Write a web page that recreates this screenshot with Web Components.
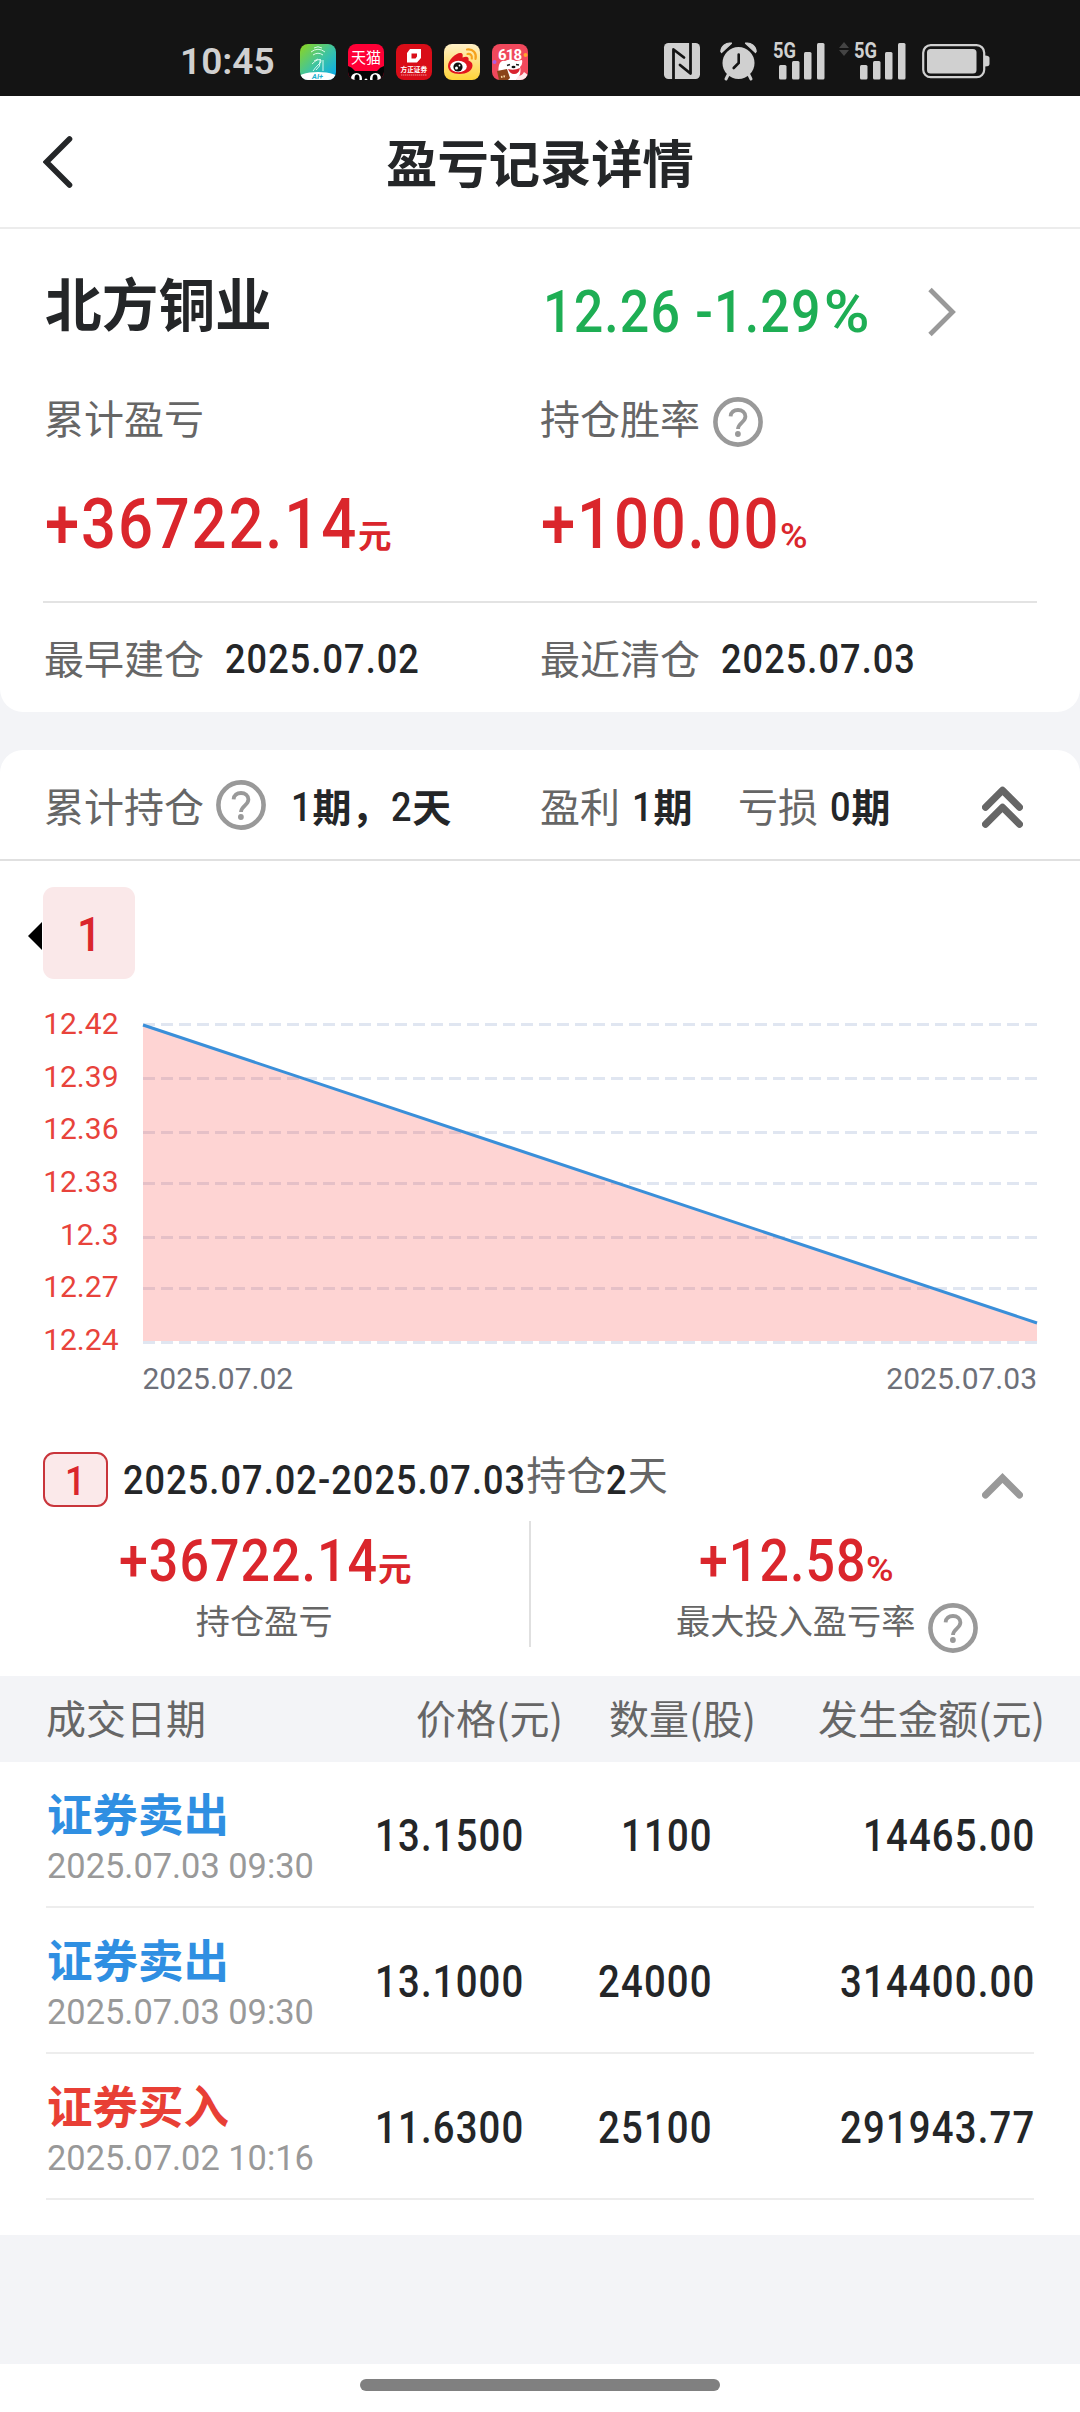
<!DOCTYPE html>
<html lang="zh-CN">
<head>
<meta charset="utf-8">
<title>盈亏记录详情</title>
<style>
    html, body {
        margin: 0;
        padding: 0;
    }
    body {
        width: 1080px;
        height: 2412px;
        overflow: hidden;
        background: #fff;
        color: #242628;
        font-family: "Noto Sans CJK SC", sans-serif;
        --gray: #666;
        --red: #da262c;
        --panel: #f3f4f7;
        --line: #e3e3e3;
    }
</style>
</head>
<body>
<pl-page></pl-page>

<script>
class BaseElement extends HTMLElement {
    constructor() {
        super();
        this.attachShadow({mode:'open'});
    }

    connectedCallback() {
        this.shadowRoot.innerHTML = this.render();
    }
}

/* narrow digits, used for all amounts and dates */
class DinText extends BaseElement {
    connectedCallback() {
        super.connectedCallback();
        const span = this.shadowRoot.querySelector('span');
        this.style.width = span.getBoundingClientRect().width + 'px';
    }

    render() {
        return `
            <style>
                :host {
                    display:inline-block;
                    flex:none;
                    font-family:Roboto, "Liberation Sans", sans-serif;
                    font-weight:500;
                    line-height:1;
                    text-align:left;
                    white-space:nowrap;
                }
                span {
                    display:inline-block;
                    letter-spacing:var(--spacing, .03em);
                    transform:scaleX(var(--stretch, .88));
                    transform-origin:0 50%;
                }
            </style>
            <span><slot></slot></span>
        `;
    }
}

class HelpIcon extends BaseElement {
    render() {
        return `
            <style>
                :host { display:block; flex:none; width:50px; height:50px; }
                svg { display:block; }
            </style>
            <svg width="50" height="50" viewBox="0 0 50 50" fill="none" stroke="#999">
                <circle cx="25" cy="25" r="22.6" stroke-width="4.6"/>
                <path d="M17.6 19.4C17.8 15 21 13 25 13s7.4 2.6 7.4 6.600c0 5.600-7.400 6.400-7.400 12.400" stroke-width="3.800"/>
                <circle cx="24.900" cy="37" r="2.900" fill="#999" stroke="none"/>
            </svg>
        `;
    }
}

class ChevronIcon extends BaseElement {
    get type(){
        return this.getAttribute("type");
    }

    get shape(){
        const shapes = {
            back: '<svg width="30" height="54" viewBox="0 0 30 54"><path d="M26.500 4L3.500 27l23 23" stroke="#242628" stroke-width="5.600" stroke-linecap="round"/></svg>',
            next: '<svg width="30" height="52" viewBox="0 0 30 52"><path d="M3 3.500L25.500 26 3 48.500" stroke="#999" stroke-width="4.800"/></svg>',
            up: '<svg width="41" height="26" viewBox="0 0 41 26"><path d="M3.500 22l17-17 17 17" stroke="#999" stroke-width="7" stroke-linecap="round"/></svg>',
            double: '<svg width="41" height="42" viewBox="0 0 41 42"><path d="M3.500 21.200l17-17 17 17M3.500 38.200l17-17 17 17" stroke="#666" stroke-width="7" stroke-linecap="round" stroke-linejoin="round"/></svg>'
        };
        return shapes[this.type];
    }

    render() {
        return `
            <style>
                :host { display:block; flex:none; }
                svg { display:block; fill:none; }
            </style>
            ${this.shape}
        `;
    }
}

class StatusBar extends BaseElement {
    signal() {
        return `
            <svg width="52" height="38" viewBox="0 0 52 38" fill="#d0d0d0">
                <text x="0" y="16" font-size="22.500" font-weight="700" textLength="23" lengthAdjust="spacingAndGlyphs">5G</text>
                <rect x="6" y="23" width="7.500" height="14.500" rx="1.500"/>
                <rect x="19" y="19" width="7.500" height="18.500" rx="1.500"/>
                <rect x="31" y="10" width="7.500" height="27.500" rx="1.500"/>
                <rect x="44" y="1" width="7.500" height="36.500" rx="1.500"/>
            </svg>
        `;
    }

    render() {
        return `
            <style>
                :host {
                    display:flex;
                    align-items:center;
                    box-sizing:border-box;
                    height:96px;
                    padding:28px 0 0 180px;
                    background:#141414;
                    color:#d0d0d0;
                    font-family:Roboto, "Noto Sans CJK SC", sans-serif;
                }
                svg { display:block; flex:none; overflow:visible; }
                .time {
                    width:120px;
                    font-size:37px;
                    font-weight:600;
                    line-height:1;
                    padding-bottom:2px;
                }
                .apps { display:flex; gap:12px; width:364px; }
                .system { display:flex; align-items:center; padding-bottom:2px; }
                .alarm { margin-left:20px; }
                .sim1 { margin-left:16px; }
                .arrows { margin:-24px 5px 0 14px; }
                .battery { margin-left:16px; }
            </style>
            <div class="time">10:45</div>
            <div class="apps">
                <svg width="36" height="36" viewBox="0 0 36 36">
                    <defs>
                        <linearGradient id="g1" x1="0" y1="0" x2="1" y2="1"><stop offset="0" stop-color="#8fd51c"/><stop offset=".5" stop-color="#3fc4a0"/><stop offset="1" stop-color="#00a8f5"/></linearGradient>
                        <clipPath id="c1"><rect width="36" height="36" rx="8"/></clipPath>
                    </defs>
                    <g clip-path="url(#c1)">
                        <rect width="36" height="36" fill="url(#g1)"/>
                        <path d="M14 4q4-2.500 8 0M11 8q7-5.500 14 0M13 11q5-3.500 10 0M12 20q6-6 9-4 1 2-3 5-3 3-5 6M16 26q5-4 4-8M23 16v11M20 15v4M14 17l4-2" fill="none" stroke="#e8fff6" stroke-width=".9"/>
                        <ellipse cx="18" cy="36" rx="22" ry="8" fill="#fff"/>
                        <text x="12" y="35" font-size="7.500" font-weight="700" font-style="italic" fill="#22b0d0">AI+</text>
                    </g>
                </svg>
                <svg width="36" height="36" viewBox="0 0 36 36">
                    <defs><clipPath id="c2"><rect width="36" height="36" rx="8"/></clipPath></defs>
                    <g clip-path="url(#c2)">
                        <rect width="36" height="36" fill="#ff0036"/>
                        <path d="M0 22q4 1 7 5h22q3-4 7-5v14H0z" fill="#050505"/>
                        <g fill="#fff"><circle cx="8.500" cy="34.500" r="5.500"/><circle cx="27.500" cy="34.500" r="5.500"/><circle cx="18" cy="36" r="1.500"/></g>
                        <ellipse cx="9" cy="34.500" rx="2.500" ry="4"/><ellipse cx="27" cy="34.500" rx="2.500" ry="4"/>
                        <text x="3" y="19" font-size="15" fill="#fff" font-weight="400">天猫</text>
                    </g>
                </svg>
                <svg width="36" height="36" viewBox="0 0 36 36">
                    <rect width="36" height="36" rx="8" fill="#d90d18"/>
                    <path fill-rule="evenodd" d="M14 5h11v9l-4 4.500H11V9zM15.500 9.500v5h4l1.500-2v-3z" fill="#fff"/>
                    <text x="4.500" y="28" font-size="6.700" fill="#fff" font-weight="700">方正证券</text>
                    <path d="M5 31h26" stroke="#f08a8a" stroke-width="1" stroke-dasharray="1.500 .5"/>
                </svg>
                <svg width="36" height="36" viewBox="0 0 36 36">
                    <defs><linearGradient id="g2" x1="0" y1="0" x2="0" y2="1"><stop offset="0" stop-color="#fff0c8"/><stop offset="1" stop-color="#ffd338"/></linearGradient></defs>
                    <rect width="36" height="36" rx="8" fill="url(#g2)"/>
                    <path d="M4 22c0-6 8-13 12-13 3 0 3 2 2.500 4.500 4-1.500 7-1 6 3 2 .7 4 2 4 5 0 5-6 8.500-13 8.500S4 27 4 22z" fill="#e2161e"/>
                    <ellipse cx="14.500" cy="22.500" rx="8.300" ry="5.800" fill="#fff"/>
                    <circle cx="14" cy="23" r="4.600" fill="#111"/><circle cx="12.500" cy="24" r="1.500" fill="#fff"/><circle cx="15.500" cy="21.500" r=".9" fill="#fff"/>
                    <path d="M23 5.500c6-1 10 4 8.500 9.500M23.500 10c3-.5 5 1.500 4.300 4.500" fill="none" stroke="#f6a21c" stroke-width="2.200" stroke-linecap="round"/>
                </svg>
                <svg width="36" height="36" viewBox="0 0 36 36">
                    <defs><clipPath id="c5"><rect width="36" height="36" rx="8"/></clipPath></defs>
                    <g clip-path="url(#c5)">
                        <rect width="36" height="36" fill="#f0485c"/>
                        <circle cx="2.500" cy="18" r="2" fill="#b25be0"/><circle cx="33.500" cy="11" r="2" fill="#ffa62b"/>
                        <path d="M7 21q2-5 6-4 6-3 11 0l6-1q1 4-2 7 2 8-4 13H10q-5-6-3-15z" fill="#fff"/>
                        <path d="M26 32q4 0 6-4l4 3v5H24z" fill="#ffe8ea"/>
                        <path d="M16 25q6 2 12-1-1 6-6 6-4 0-6-5z" fill="#d8222e"/>
                        <path d="M15 21.500l3-1M24 20.500l3 .5" stroke="#222" stroke-width="1.500"/><ellipse cx="21.500" cy="23" rx="2" ry="1.300" fill="#111"/>
                        <path d="M5 27l10-2 3 9-2 2H7z" fill="#8a4318"/><path d="M9 33l5-1" stroke="#f7d6a0" stroke-width="2" stroke-dasharray="1.500 1"/>
                        <text x="6" y="15.500" font-size="15" font-weight="700" fill="#fff" textLength="24">618</text>
                    </g>
                </svg>
            </div>
            <div class="system">
                <svg width="36" height="36" viewBox="0 0 36 36">
                    <rect width="36" height="36" rx="4.500" fill="#d0d0d0"/>
                    <path d="M9.500 36V6.500l10.500 8M26.500 0v30.500L16 22" fill="none" stroke="#141414" stroke-width="2.800" stroke-linejoin="round" stroke-linecap="round"/>
                </svg>
                <svg class="alarm" width="37" height="38" viewBox="0 0 37 38" fill="#d0d0d0">
                    <path d="M8 33l-2 4M29 33l2 4" stroke="#d0d0d0" stroke-width="3" stroke-linecap="round"/>
                    <circle cx="18.500" cy="21" r="16"/>
                    <path d="M.8 9.500A9 9 0 0 1 11.500 1.200L1.500 10.500zM36.200 9.500A9 9 0 0 0 25.500 1.200l10 9.300z" stroke="#d0d0d0" stroke-width="1.200" stroke-linejoin="round"/>
                    <path d="M18.700 12.500v8.500l-5 5" fill="none" stroke="#141414" stroke-width="2.600" stroke-linecap="round"/>
                </svg>
                <div class="sim1">${this.signal()}</div>
                <svg class="arrows" width="10" height="16" viewBox="0 0 10 16" fill="#444"><path d="M0 7l5-6 5 6zM0 9h10l-5 6z"/></svg>
                <div>${this.signal()}</div>
                <svg class="battery" width="68" height="36" viewBox="0 0 68 36">
                    <rect x="1.200" y="2.200" width="61" height="32" rx="7.500" fill="none" stroke="#d0d0d0" stroke-width="2.200"/>
                    <rect x="5" y="6" width="49.500" height="24.500" rx="3.500" fill="#d0d0d0"/>
                    <path d="M63 12.500q4.500 0 4.500 2.500v6q0 2.500-4.500 2.500z" fill="#d0d0d0"/>
                </svg>
            </div>
        `;
    }
}

class NavHeader extends BaseElement {
    render() {
        return `
            <style>
                :host {
                    display:grid;
                    grid-template-columns:140px 1fr 140px;
                    align-items:center;
                    box-sizing:border-box;
                    height:133px;
                    border-bottom:2px solid #ececec;
                }
                chevron-icon { padding-left:43px; }
                .title {
                    padding-bottom:2px;
                    text-align:center;
                    font-size:51.300px;
                    font-weight:700;
                    line-height:1;
                }
            </style>
            <chevron-icon type="back"></chevron-icon>
            <div class="title"><slot></slot></div>
        `;
    }
}

class StockSummary extends BaseElement {
    render() {
        return `
            <style>
                :host {
                    display:block;
                    height:483px;
                    background:#fff;
                    border-radius:0 0 23px 23px;
                    color:var(--gray);
                    font-size:40px;
                    line-height:1;
                }
                .row {
                    display:grid;
                    grid-template-columns:496px 1fr;
                    align-items:center;
                    padding:0 43px 0 44px;
                }
                .row > div { display:flex; align-items:center; }
                .head { height:163px; }
                .name {
                    padding:0 0 19px 1px;
                    font-size:56.700px;
                    font-weight:700;
                    color:#242628;
                }
                .quote {
                    --spacing:.022em;
                    gap:55px;
                    padding:2px 0 0 3px;
                    font-size:59px;
                    color:#1eae54;
                }
                .percent {
                    display:inline-block;
                    margin:0 .16em 0 .05em;
                    transform:scaleX(1.2);
                    transform-origin:0 50%;
                }
                .labels { height:50px; }
                help-icon { margin:5px 0 -5px 13px; }
                .values { box-sizing:border-box; height:159px; padding-top:5px; color:var(--red); }
                .row > .value { align-items:baseline; padding-left:1px; font-size:70px; }
                .unit { font-size:33.500px; font-weight:700; }
                .value din-text.unit { --stretch:1.07; font-size:35px; font-weight:500; }
                .line { height:2px; margin:0 43px; background:var(--line); }
                .dates { height:107px; }
                .dates din-text { margin-left:21px; padding-top:5px; font-size:41px; color:#242628; }
            </style>
            <div class="row head">
                <div class="name">北方铜业</div>
                <div class="quote"><din-text>12.26 -1.29<span class="percent">%</span></din-text><chevron-icon type="next"></chevron-icon></div>
            </div>
            <div class="row labels">
                <div>累计盈亏</div>
                <div>持仓胜率<help-icon></help-icon></div>
            </div>
            <div class="row values">
                <div class="value"><din-text>+36722.14</din-text><span class="unit">元</span></div>
                <div class="value"><din-text>+100.00</din-text><din-text class="unit">%</din-text></div>
            </div>
            <div class="line"></div>
            <div class="row dates">
                <div>最早建仓<din-text>2025.07.02</din-text></div>
                <div>最近清仓<din-text>2025.07.03</din-text></div>
            </div>
        `;
    }
}

class HoldingBar extends BaseElement {
    render() {
        return `
            <style>
                :host {
                    display:grid;
                    grid-template-columns:496px 198px 1fr auto;
                    align-items:center;
                    height:109px;
                    padding:0 57px 0 44px;
                    border-bottom:2px solid #e0e0e0;
                    color:var(--gray);
                    font-size:40px;
                    line-height:1;
                }
                div { display:flex; align-items:center; }
                help-icon { margin:0 25px 0 12px; }
                b { display:flex; align-items:center; font-size:39px; color:#242628; padding-top:1px; }
                din-text { font-size:41px; padding-top:4px; }
                .gap { margin-left:12px; }
                chevron-icon { padding-top:4px; }
            </style>
            <div>累计持仓<help-icon></help-icon><b><din-text>1</din-text>期，<din-text>2</din-text>天</b></div>
            <div>盈利<b class="gap"><din-text>1</din-text>期</b></div>
            <div>亏损<b class="gap"><din-text>0</din-text>期</b></div>
            <chevron-icon type="double"></chevron-icon>
        `;
    }
}

class PeriodTabs extends BaseElement {
    render() {
        return `
            <style>
                :host { display:flex; align-items:center; padding:26px 0 0 28px; }
                .arrow {
                    border:14px solid transparent;
                    border-left:0;
                    border-right-color:#000;
                    margin:6px 1px 0 0;
                }
                .tab {
                    display:flex;
                    align-items:center;
                    justify-content:center;
                    box-sizing:border-box;
                    width:92px;
                    height:92px;
                    padding:2px 0 0 2px;
                    border-radius:11px;
                    background:#fae8e9;
                    color:var(--red);
                    font-size:49px;
                }
            </style>
            <div class="arrow"></div>
            <div class="tab"><din-text><slot></slot></din-text></div>
        `;
    }
}

class PriceChart extends BaseElement {
    get ticks(){
        return [
            ['12.42', 1024.5, 1034.3],
            ['12.39', 1078.5, 1087.2],
            ['12.36', 1132.5, 1139.2],
            ['12.33', 1183.5, 1192.2],
            ['12.3', 1237.5, 1245.2],
            ['12.27', 1288.5, 1297.2],
            ['12.24', 1342.5, 1350]
        ];
    }

    render() {
        const grid = this.ticks.map(t => `<path d="M143 ${t[1]}H1037"/>`).join('');
        const labels = this.ticks.map(t => `<text x="118.500" y="${t[2]}">${t[0]}</text>`).join('');
        return `
            <style>
                :host { display:block; height:473px; }
                svg { display:block; font-family:Roboto, sans-serif; font-size:30px; }
            </style>
            <svg width="1080" height="473" viewBox="0 979 1080 473">
                <g stroke="#e0e6f1" stroke-width="3" stroke-dasharray="12 6">${grid}</g>
                <path d="M143 1025L1037 1323V1341H143z" fill="rgba(250,40,35,.2)"/>
                <path d="M143 1025L1037 1323" stroke="#3a8fd9" stroke-width="3"/>
                <g fill="#e8433b" text-anchor="end">${labels}</g>
                <g fill="#6e7079">
                    <text x="142.500" y="1389">2025.07.02</text>
                    <text x="1037" y="1389" text-anchor="end">2025.07.03</text>
                </g>
            </svg>
        `;
    }
}

class PeriodDetail extends BaseElement {
    render() {
        return `
            <style>
                :host { display:block; height:224px; line-height:1; color:var(--gray); }
                .title {
                    display:flex;
                    align-items:center;
                    height:55px;
                    padding:0 57px 0 43px;
                    font-size:40px;
                }
                .title din-text { font-size:41px; color:#242628; padding-top:2px; }
                .no {
                    display:flex;
                    align-items:center;
                    justify-content:center;
                    box-sizing:border-box;
                    width:65px;
                    height:55px;
                    margin-right:15px;
                    border:2px solid #c9353b;
                    border-radius:11px;
                    background:#fbe9ea;
                }
                .title .no din-text { color:var(--red); padding-top:4px; }
                .text { padding-bottom:13px; }
                chevron-icon { margin-left:auto; padding-top:12px; }
                .stats {
                    display:grid;
                    grid-template-columns:1fr 1fr;
                    height:126px;
                    margin-top:14px;
                    padding-right:19px;
                }
                .stat {
                    --spacing:.02em;
                    display:flex;
                    flex-direction:column;
                    align-items:center;
                    padding-top:10px;
                }
                .stat:first-child { border-right:2px solid #e0e0e0; }
                .value { display:flex; align-items:baseline; padding-left:2px; color:var(--red); font-size:59px; }
                .unit { font-size:33.500px; font-weight:700; }
                .value din-text.unit { --stretch:1.07; font-size:35px; font-weight:500; }
                .label { display:flex; align-items:center; height:50px; margin-top:4px; font-size:34.200px; }
                /* the help icon hangs outside so the label stays centred */
                help-icon { margin:9px -63px -9px 13px; }
            </style>
            <div class="title">
                <div class="no"><din-text>1</din-text></div>
                <din-text>2025.07.02-2025.07.03</din-text>
                <span class="text">持仓</span><din-text>2</din-text><span class="text">天</span>
                <chevron-icon type="up"></chevron-icon>
            </div>
            <div class="stats">
                <div class="stat">
                    <div class="value"><din-text>+36722.14</din-text><span class="unit">元</span></div>
                    <div class="label">持仓盈亏</div>
                </div>
                <div class="stat">
                    <div class="value"><din-text>+12.58</din-text><din-text class="unit">%</din-text></div>
                    <div class="label">最大投入盈亏率<help-icon></help-icon></div>
                </div>
            </div>
        `;
    }
}

class TradeHead extends BaseElement {
    render() {
        return `
            <style>
                :host {
                    display:grid;
                    grid-template-columns:1fr 193px 289px;
                    align-items:center;
                    height:86px;
                    padding:0 35px 0 46px;
                    background:var(--panel);
                    color:var(--gray);
                    font-size:40px;
                    line-height:1;
                    text-align:right;
                }
                div { padding-bottom:4px; }
                .first { display:flex; justify-content:space-between; }
            </style>
            <div class="first"><span>成交日期</span><span>价格(元)</span></div>
            <div>数量(股)</div>
            <div>发生金额(元)</div>
        `;
    }
}

class TradeRow extends BaseElement {
    render() {
        const color = this.getAttribute("side") === "buy" ? "#e83f35" : "#2f8fe2";
        return `
            <style>
                :host {
                    --spacing:.031em;
                    display:grid;
                    grid-template-columns:1fr 189px 322px;
                    align-items:center;
                    box-sizing:border-box;
                    height:146px;
                    margin:0 46px;
                    border-bottom:2px solid #ededed;
                    font-size:43.500px;
                    line-height:1;
                    text-align:right;
                }
                .first { display:flex; justify-content:space-between; align-items:center; }
                .trade { text-align:left; padding:5px 0 0 1px; }
                .type { font-size:45.500px; font-weight:700; color:${color}; }
                .time { margin-top:13px; font-family:Roboto, sans-serif; font-size:34.400px; color:#999; }
                din-text { margin-right:-1px; padding-top:5px; }
            </style>
            <div class="first">
                <div class="trade">
                    <div class="type"><slot></slot></div>
                    <div class="time">${this.getAttribute("time")}</div>
                </div>
                <din-text>${this.getAttribute("price")}</din-text>
            </div>
            <div><din-text>${this.getAttribute("count")}</din-text></div>
            <div><din-text>${this.getAttribute("amount")}</din-text></div>
        `;
    }
}

class PlPage extends BaseElement {
    render() {
        return `
            <style>
                :host { display:flex; flex-direction:column; height:2412px; }
                .content { height:2135px; background:var(--panel); }
                .card {
                    height:1485px;
                    margin-top:38px;
                    background:#fff;
                    border-radius:23px 23px 0 0;
                }
                .home { display:flex; flex:1; justify-content:center; background:#fff; }
                .home div { width:360px; height:12px; margin-top:15px; border-radius:6px; background:#808080; }
            </style>
            <status-bar></status-bar>
            <nav-header>盈亏记录详情</nav-header>
            <div class="content">
                <stock-summary></stock-summary>
                <div class="card">
                    <holding-bar></holding-bar>
                    <period-tabs>1</period-tabs>
                    <price-chart></price-chart>
                    <period-detail></period-detail>
                    <trade-head></trade-head>
                    <trade-row side="sell" time="2025.07.03 09:30" price="13.1500" count="1100" amount="14465.00">证券卖出</trade-row>
                    <trade-row side="sell" time="2025.07.03 09:30" price="13.1000" count="24000" amount="314400.00">证券卖出</trade-row>
                    <trade-row side="buy" time="2025.07.02 10:16" price="11.6300" count="25100" amount="291943.77">证券买入</trade-row>
                </div>
            </div>
            <div class="home"><div></div></div>
        `;
    }
}

window.customElements.define('din-text', DinText);
window.customElements.define('help-icon', HelpIcon);
window.customElements.define('chevron-icon', ChevronIcon);
window.customElements.define('status-bar', StatusBar);
window.customElements.define('nav-header', NavHeader);
window.customElements.define('stock-summary', StockSummary);
window.customElements.define('holding-bar', HoldingBar);
window.customElements.define('period-tabs', PeriodTabs);
window.customElements.define('price-chart', PriceChart);
window.customElements.define('period-detail', PeriodDetail);
window.customElements.define('trade-head', TradeHead);
window.customElements.define('trade-row', TradeRow);
window.customElements.define('pl-page', PlPage);
</script>
</body>
</html>
